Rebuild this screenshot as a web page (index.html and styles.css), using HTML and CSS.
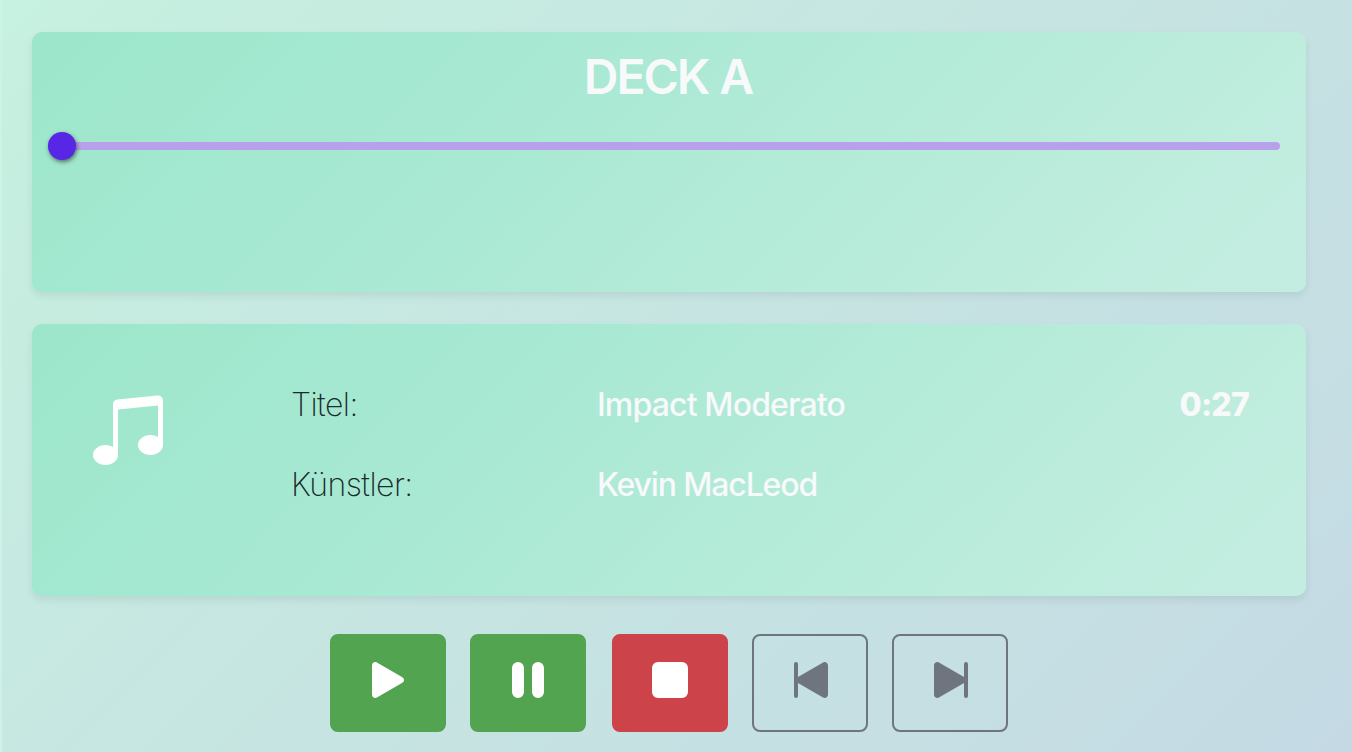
FILE: index.html
```html
<!DOCTYPE html>
<html lang="de">
<head>
<meta charset="utf-8">
<title>Deck A</title>
<link rel="stylesheet" href="styles.css">
</head>
<body>
<main class="player">
  <section class="card deck">
    <h1 class="deck-title">DECK A</h1>
    <div class="slider"><div class="slider-track"></div><div class="slider-thumb"></div></div>
  </section>
  <section class="card track">
    <svg class="note" viewBox="0 0 16 16" fill="currentColor"><path d="M6 13c0 1.105-1.12 2-2.5 2S1 14.105 1 13c0-1.104 1.12-2 2.5-2s2.5.896 2.5 2zm9-2c0 1.105-1.12 2-2.5 2s-2.5-.895-2.5-2 1.12-2 2.5-2 2.5.895 2.5 2z"/><path fill-rule="evenodd" d="M14 11V2h1v9h-1zM6 3v10H5V3h1z"/><path d="M5 2.905a1 1 0 0 1 .9-.995l8-.8a1 1 0 0 1 1.1.995V3L5 4V2.905z"/></svg>
    <dl class="meta">
      <dt class="label">Titel:</dt><dd class="value">Impact Moderato</dd>
      <dt class="label">Künstler:</dt><dd class="value artist">Kevin MacLeod</dd>
    </dl>
    <div class="time">0:27</div>
  </section>
  <nav class="controls">
    <button class="btn play" aria-label="Play"><svg class="icon" viewBox="0 0 16 16" fill="currentColor"><path d="m11.596 8.697-6.363 3.692c-.54.313-1.233-.066-1.233-.697V4.308c0-.63.692-1.01 1.233-.696l6.363 3.692a.802.802 0 0 1 0 1.393z"/></svg></button>
    <button class="btn pause" aria-label="Pause"><svg class="icon" viewBox="0 0 16 16" fill="currentColor"><path d="M5.5 3.5A1.5 1.5 0 0 1 7 5v6a1.5 1.5 0 0 1-3 0V5a1.5 1.5 0 0 1 1.5-1.5zm5 0A1.5 1.5 0 0 1 12 5v6a1.5 1.5 0 0 1-3 0V5a1.5 1.5 0 0 1 1.5-1.5z"/></svg></button>
    <button class="btn stop" aria-label="Stop"><svg class="icon" viewBox="0 0 16 16" fill="currentColor"><path d="M5 3.5h6A1.5 1.5 0 0 1 12.5 5v6a1.5 1.5 0 0 1-1.5 1.5H5A1.5 1.5 0 0 1 3.5 11V5A1.5 1.5 0 0 1 5 3.5z"/></svg></button>
    <button class="btn skip" aria-label="Previous"><svg class="icon" viewBox="0 0 16 16" fill="currentColor"><path d="M4 4a.5.5 0 0 1 1 0v3.248l6.267-3.636c.54-.313 1.232.066 1.232.696v7.384c0 .63-.692 1.01-1.232.697L5 8.753V12a.5.5 0 0 1-1 0V4z"/></svg></button>
    <button class="btn skip" aria-label="Next"><svg class="icon" viewBox="0 0 16 16" fill="currentColor"><path d="M12.5 4a.5.5 0 0 0-1 0v3.248L5.233 3.612C4.693 3.3 4 3.678 4 4.308v7.384c0 .63.692 1.01 1.233.697L11.5 8.753V12a.5.5 0 0 0 1 0V4z"/></svg></button>
  </nav>
</main>
</body>
</html>
```
FILE: styles.css
```css
* { box-sizing: border-box; }
body {
  margin: 0;
  font-family: Inter, "Liberation Sans", sans-serif;
  color: #f8f9fa;
}
.player {
  height: 752px;
  overflow: hidden;
  padding: 32px 46px 0 30px;
  border-left: 2px solid #cdf3e6;
  background: linear-gradient(135deg, #c7f1e0 0%, #c6ede0 14%, #c6e4e2 52%, #c5dee3 82%, #c4d9e4 100%);
  display: flex;
  flex-direction: column;
}
.card {
  border-radius: 10px;
  background: linear-gradient(135deg, #9ce6cb 0%, #a9e9d4 38%, #bcecdc 78%, #c4ede1 100%);
  box-shadow: 0 4px 8px rgba(0, 0, 0, .075);
}
.deck { height: 260px; padding: 16px 26px 0 16px; }
.deck-title {
  margin: 0 -10px 0 0;
  text-align: center;
  font-size: 48px;
  line-height: 58px;
  font-weight: 570;
  letter-spacing: -2.1px;
  word-spacing: 1px;
  text-indent: -2px;
}
.slider { display: grid; align-items: center; height: 28px; margin-top: 26px; }
.slider-track, .slider-thumb { grid-area: 1 / 1; }
.slider-track { height: 8px; border-radius: 4px; background: #b7a1eb; }
.slider-thumb {
  width: 28px;
  height: 28px;
  border-radius: 50%;
  background: #5827e5;
  box-shadow: 1px 2px 4px rgba(0, 0, 0, .5);
}
.track {
  height: 272px;
  margin-top: 32px;
  padding: 57px 57px 0 56px;
  display: flex;
  font-size: 32px;
  line-height: 48px;
}
.note { width: 80px; height: 80px; margin-top: 9px; color: #fff; }
.meta {
  flex: 1;
  margin: 0 0 0 123px;
  display: grid;
  grid-template-columns: 306px auto;
  grid-auto-rows: 48px;
  row-gap: 32px;
}
.label { font-weight: 200; color: #1b2a2a; letter-spacing: -.55px; }
.value { margin: 0; font-weight: 500; letter-spacing: -.85px; }
.artist { letter-spacing: -1.15px; }
.time { font-weight: 800; letter-spacing: -.8px; }
.controls { display: flex; justify-content: center; gap: 24px; margin-top: 38px; }
.btn {
  width: 116px;
  height: 98px;
  padding: 12px 0 0;
  border: 2px solid transparent;
  border-radius: 8px;
  display: flex;
  justify-content: center;
  align-items: flex-start;
  color: #fff;
}
.icon { width: 64px; height: 64px; flex: none; }
.play, .pause { background: #52a451; border-color: #52a451; }
.stop { background: #cc4449; border-color: #cc4449; margin-left: 2px; }
.skip { background: transparent; border-color: #6e757e; color: #6e757e; }
```
